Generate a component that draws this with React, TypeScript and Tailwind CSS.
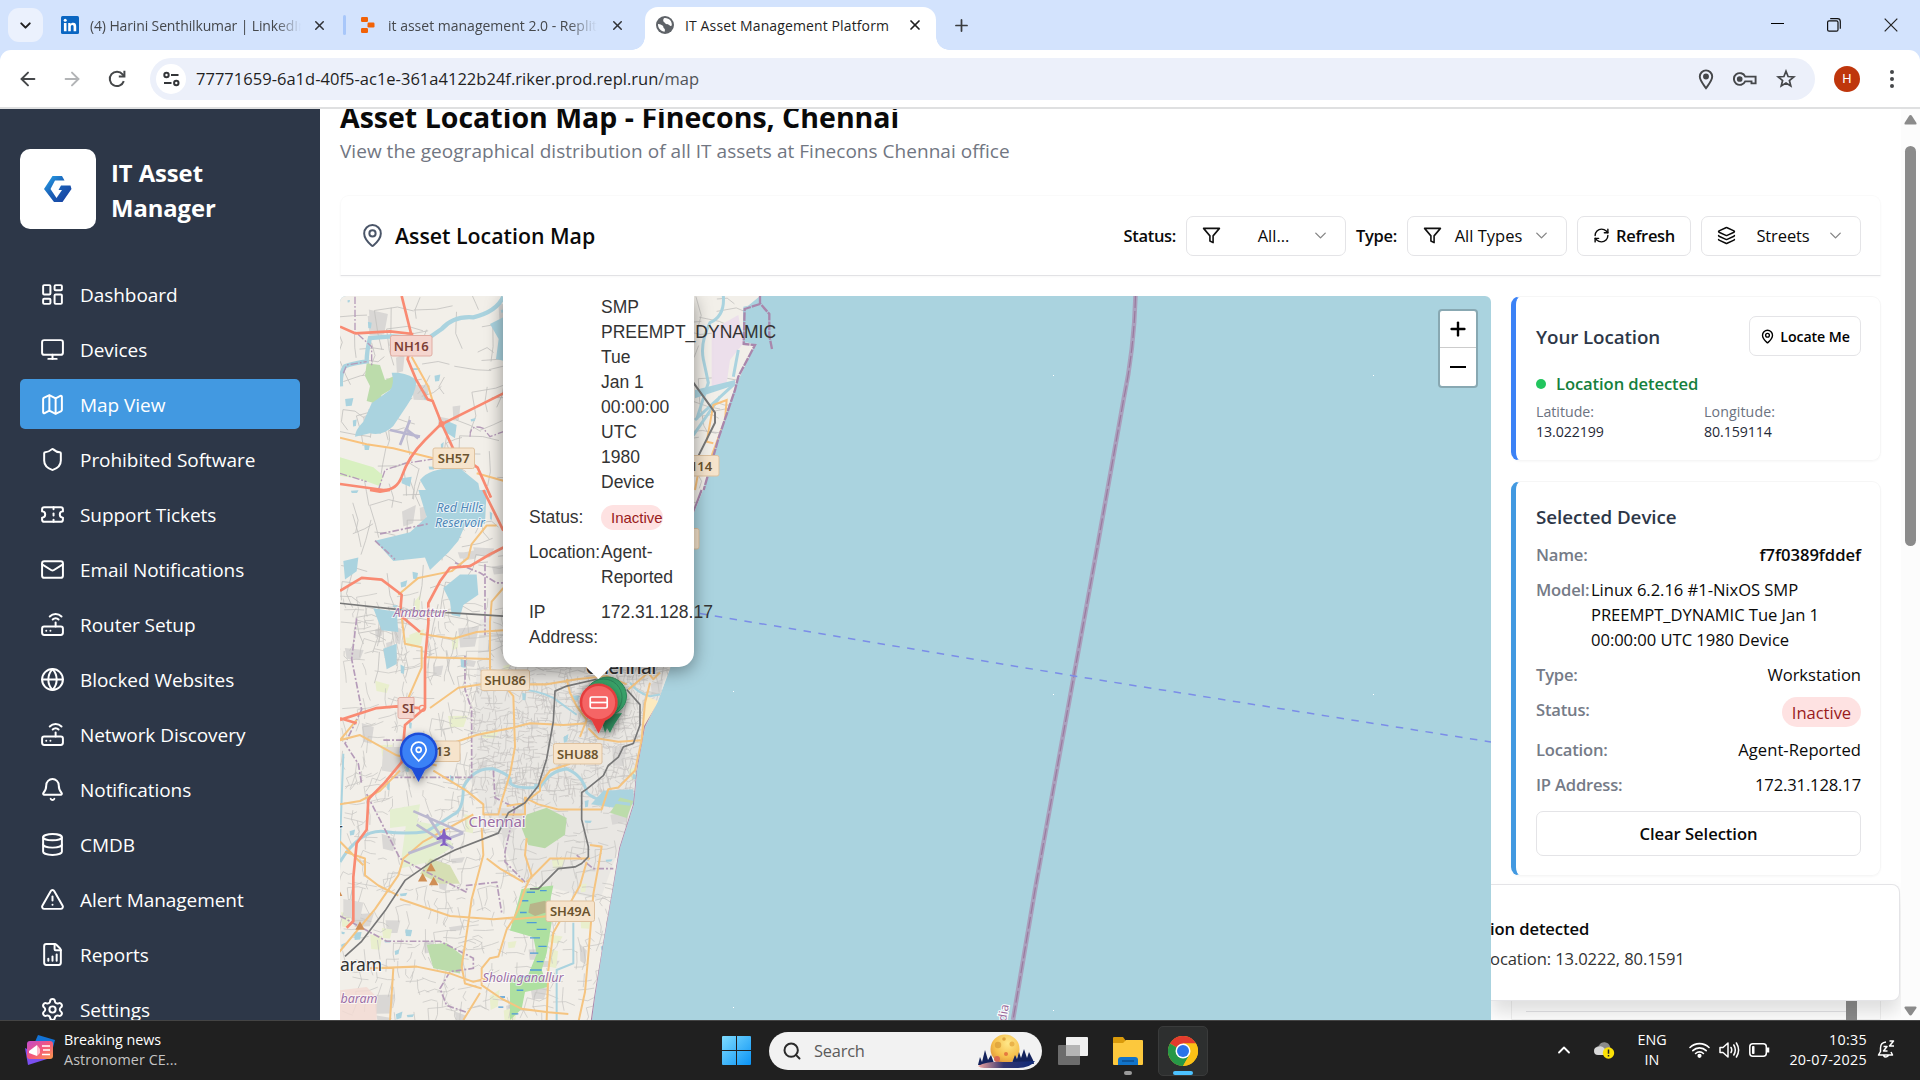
import React from "react";
import {
  ArrowLeft, ArrowRight, Bell, ChevronDown, ChevronUp, Database, FileChartColumnIncreasing, Globe, Layers,
  LayoutDashboard, Mail, Map as MapIcon, MapPin, Monitor, Plus, RefreshCw, Router, Search, Settings, Shield,
  Ticket, TriangleAlert, X,
} from "lucide-react";

const NAV = [
  { icon: LayoutDashboard, label: "Dashboard" },
  { icon: Monitor, label: "Devices" },
  { icon: MapIcon, label: "Map View", active: true },
  { icon: Shield, label: "Prohibited Software" },
  { icon: Ticket, label: "Support Tickets" },
  { icon: Mail, label: "Email Notifications" },
  { icon: Router, label: "Router Setup" },
  { icon: Globe, label: "Blocked Websites" },
  { icon: Router, label: "Network Discovery" },
  { icon: Bell, label: "Notifications" },
  { icon: Database, label: "CMDB" },
  { icon: TriangleAlert, label: "Alert Management" },
  { icon: FileChartColumnIncreasing, label: "Reports" },
  { icon: Settings, label: "Settings" },
];

/* ---------- browser chrome ---------- */

function TabStrip() {
  return (
    <div className="flex h-[50px] shrink-0 items-center bg-[#d3e3fd] pl-2 text-[14px] text-[#45484c]">
      <div className="flex h-[34px] w-[35px] items-center justify-center rounded-[11px] bg-[#ebf1fd]">
        <ChevronDown size={17} strokeWidth={2.8} className="text-[#1f1f1f]" />
      </div>
      <div className="ml-[18px] flex w-[282px] items-center">
        <svg width="18" height="18" viewBox="0 0 18 18">
          <rect width="18" height="18" rx="1.5" fill="#0a66c2" />
          <circle cx="4.2" cy="4.2" r="1.5" fill="#fff" />
          <path d="M2.9 7h2.6v8.2H2.9zM7.2 7h2.4v1.2C10.200 7.200 11 6.800 12.200 6.800c2.400 0 3 1.500 3 3.800v4.600h-2.600v-4.200c0-1.200-.2-2-1.300-2-1.200 0-1.500.9-1.500 2v4.200H7.200z" fill="#fff" />
        </svg>
        <span className="ml-[11px] w-[211px] overflow-hidden whitespace-nowrap tracking-[-0.13px] [mask-image:linear-gradient(to_right,#000_88%,transparent)]">(4) Harini Senthilkumar | LinkedIn</span>
        <X size={15} strokeWidth={2.4} className="ml-[11px] text-[#303236]" />
      </div>
      <div className="h-5 w-[3px] rounded-full bg-[#a8c7fa]" />
      <div className="ml-[15px] flex w-[284px] items-center">
        <svg width="14" height="16" viewBox="0 0 14 16" fill="#f26207">
          <rect x="0" y="0" width="7" height="5" rx="1.2" />
          <rect x="6.500" y="5.500" width="7" height="5" rx="1.2" />
          <rect x="0" y="11" width="7" height="5" rx="1.2" />
        </svg>
        <span className="ml-[13px] w-[209px] overflow-hidden whitespace-nowrap [mask-image:linear-gradient(to_right,#000_86%,transparent)]">it asset management 2.0 - Replit</span>
        <X size={15} strokeWidth={2.4} className="ml-[13px] text-[#303236]" />
      </div>
      <div className="relative mt-[7px] flex h-[43px] w-[291px] items-center self-start rounded-t-[13px] bg-white pl-[11px] text-[#1f1f1f] before:absolute before:bottom-0 before:left-[-13px] before:size-[13px] before:bg-[radial-gradient(circle_at_0_0,transparent_12.5px,#fff_13px)] after:absolute after:right-[-13px] after:bottom-0 after:size-[13px] after:bg-[radial-gradient(circle_at_100%_0,transparent_12.5px,#fff_13px)]">
        <svg width="18" height="18" viewBox="0 0 18 18" className="mb-[7px]">
          <circle cx="9" cy="9" r="9" fill="#5f6368" />
          <path d="M2 8c2-.2 3 .8 4.500 1.600s.3 2.400 1.700 2.800c1.200.4.4 2 .8 3.200-4 .1-7.200-3.400-7-7.600zM8 2.200c2-.5 5.200.6 6.600 2.600.9 1.400 1.300 2.800 1.200 4.700-1 .8-1.900.6-2.500-.4-.7-1-2-.8-3.200-1.200s-1-1.700-2.200-2c-1-.3-.8-2.900.1-3.700z" fill="#fff" />
        </svg>
        <span className="mb-[7px] ml-[11px] w-[213px] whitespace-nowrap tracking-[0.12px]">IT Asset Management Platform</span>
        <X size={16} strokeWidth={2.6} className="mb-[7px] ml-[9px]" />
      </div>
      <Plus size={19} strokeWidth={2.2} className="ml-[16px] text-[#3a3c3f]" />
      <div className="ml-auto flex items-center gap-[43px] pr-[22px] text-[#1b1b1b]">
        <div className="mb-[3px] h-[1.500px] w-[13px] bg-black" />
        <svg width="14" height="14" viewBox="0 0 14 14" fill="none" stroke="#111" strokeWidth="1.200">
          <rect x=".6" y="2.800" width="10.400" height="10.400" rx="1.500" />
          <path d="M3.200.7h7.300a2.800 2.800 0 0 1 2.800 2.800v7.300" />
        </svg>
        <svg width="14" height="14" viewBox="0 0 14 14" stroke="#222" strokeWidth="1.200"><path d="M.7.7l12.600 12.600M13.300.7L.7 13.300" /></svg>
      </div>
    </div>
  );
}

function Toolbar() {
  return (
    <div className="shrink-0 bg-[#d3e3fd]">
      <div className="flex h-[59px] items-center rounded-t-[11px] border-b-2 border-[#dfe0e1] bg-white pt-px pl-[17px]">
        <ArrowLeft size={22} strokeWidth={2.1} className="text-[#45474a]" />
        <ArrowRight size={22} strokeWidth={2.1} className="ml-[22px] text-[#b2b4b6]" />
        <svg width="20" height="20" viewBox="0 0 20 20" fill="none" stroke="#454749" strokeWidth="2" className="ml-[24px]">
          <path d="M16.800 12.200A7.200 7.200 0 1 1 15.600 5.300L17 7" />
          <path d="M17.400 1.800v5.600h-5.600" />
        </svg>
        <div className="ml-[23px] flex h-[42px] w-[1665px] items-center rounded-full bg-[#ecf0fa] pl-[6px]">
          <div className="flex size-[30px] items-center justify-center rounded-full bg-white">
            <svg width="17" height="16" viewBox="0 0 17 16" fill="none" stroke="#333538" strokeWidth="2">
              <circle cx="3.500" cy="4" r="2.200" /><path d="M8 4h7.500M1 12h7.500" /><circle cx="13.300" cy="12" r="2.200" />
            </svg>
          </div>
          <span className="ml-[10px] pt-px text-[16.500px] tracking-[0.02px] text-[#1f1f1f]">77771659-6a1d-40f5-ac1e-361a4122b24f.riker.prod.repl.run<span className="text-[#505357]">/map</span></span>
          <div className="ml-auto flex items-center gap-[19px] pr-[19px]">
            <svg width="16" height="21" viewBox="0 0 16 21" fill="none" stroke="#45474a" strokeWidth="1.900">
              <path d="M8 19.200C5 15 1.800 11.500 1.800 7.600a6.200 6.200 0 0 1 12.400 0C14.200 11.500 11 15 8 19.200z" /><circle cx="8" cy="7.500" r="2" fill="#45474a" />
            </svg>
            <svg width="24" height="14" viewBox="0 0 24 14" fill="none" stroke="#45474a" strokeWidth="1.900">
              <path d="M12.200 4.600H22.600v6.800H18.500V9.400h-6.300A5.900 5.900 0 1 1 12.200 4.600z" /><circle cx="6.700" cy="7" r="1.900" fill="#45474a" />
            </svg>
            <svg width="20" height="20" viewBox="0 0 20 20" fill="none" stroke="#45474a" strokeWidth="1.700">
              <path d="M10 2.200l2.100 5.300 5.700.4-4.400 3.600 1.400 5.500L10 14l-4.800 3 1.400-5.500L2.200 7.900l5.700-.4z" />
            </svg>
          </div>
        </div>
        <div className="ml-[19px] flex size-[26px] items-center justify-center rounded-full bg-[#bf360c] font-[Roboto] text-[13px] text-white">H</div>
        <div className="ml-[30px] flex flex-col gap-[3px]">
          <i className="size-[4px] rounded-full bg-[#45474a]" /><i className="size-[4px] rounded-full bg-[#45474a]" /><i className="size-[4px] rounded-full bg-[#45474a]" />
        </div>
      </div>
    </div>
  );
}

/* ---------- sidebar ---------- */

function Sidebar() {
  return (
    <aside className="flex w-[320px] shrink-0 flex-col overflow-hidden bg-[#2d3748] px-5 pt-10 text-white">
      <div className="flex shrink-0 items-center gap-[15px]">
        <div className="flex h-20 w-[76px] items-center justify-center rounded-[10px] bg-white">
          <svg width="28" height="26" viewBox="0 0 28 26">
            <defs>
              <linearGradient id="lg" x1="0" y1="0" x2="1" y2="1"><stop offset="0" stopColor="#29a9ee" /><stop offset=".45" stopColor="#1b62b8" /><stop offset="1" stopColor="#173b9c" /></linearGradient>
            </defs>
            <path d="M8.500 0H18L20.500 4.500H11L6.500 13l6 9 5.500-8h-3.500L17 9.500h9.500L27.500 13 18.500 26H10L0 13z" fill="url(#lg)" />
          </svg>
        </div>
        <div className="pt-[4px] text-[23.800px] leading-[35px] font-bold tracking-[-0.05px]">IT Asset<br />Manager</div>
      </div>
      <nav className="mt-10 flex flex-col gap-[5px]">
        {NAV.map(({ icon: Icon, label, active }) => (
          <div key={label} className={active ? "flex h-[50px] shrink-0 items-center gap-[15px] rounded-[5px] bg-[#4299e1] pl-5" : "flex h-[50px] shrink-0 items-center gap-[15px] pl-5"}>
            <Icon size={25} strokeWidth={1.900} />
            <span className="pt-[2px] text-[19px] tracking-[-0.05px]">{label}</span>
          </div>
        ))}
      </nav>
    </aside>
  );
}

/* ---------- map ---------- */

const COAST = "M340 296H760L743 310V341L755 345 735 387 717 443 703 490 693 515 684 560 676 640 670 669 658 701 645 727 637 771 634 804 620 848 613 889 603 946 595 997 592 1020H340z";

function seeded(seed: number) {
  let s = seed;
  return () => {
    s = (s * 1664525 + 1013904223) % 4294967296;
    return s / 4294967296;
  };
}

function streets(seed: number, x0: number, y0: number, x1: number, y1: number, cell: number, p: number) {
  const r = seeded(seed);
  let d = "";
  for (let y = y0; y < y1; y += cell)
    for (let x = x0; x < x1; x += cell) {
      const jx = x + (r() - 0.5) * cell * 0.7;
      const jy = y + (r() - 0.5) * cell * 0.7;
      const t = (r() - 0.5) * cell * 0.7;
      const len = cell * (0.5 + r() * 0.9);
      const bend = (r() - 0.5) * cell * 0.8;
      if (r() < p) d += `M${jx.toFixed(1)} ${jy.toFixed(1)}l${len.toFixed(1)} ${t.toFixed(1)} ${(len * 0.7).toFixed(1)} ${bend.toFixed(1)}`;
      if (r() < p) d += `M${jx.toFixed(1)} ${jy.toFixed(1)}l${(-t).toFixed(1)} ${len.toFixed(1)} ${bend.toFixed(1)} ${(len * 0.7).toFixed(1)}`;
    }
  return d;
}

function patches(seed: number, n: number, size: number, x0: number, y0: number, x1: number, y1: number) {
  const r = seeded(seed);
  let d = "";
  for (let i = 0; i < n; i++) {
    const x = x0 + r() * (x1 - x0);
    const y = y0 + r() * (y1 - y0);
    const w = size * (0.4 + r());
    const h = size * (0.3 + r());
    const k = (r() - 0.5) * h;
    d += `M${x.toFixed(1)} ${y.toFixed(1)}l${w.toFixed(1)} ${k.toFixed(1)} ${(-w * 0.2).toFixed(1)} ${h.toFixed(1)} ${(-w * 0.7).toFixed(1)} ${(-k * 0.5).toFixed(1)}z`;
  }
  return d;
}

const ROAD_GREY = streets(7, 340, 296, 720, 660, 17, 0.34);
const ROAD_DENSE = streets(11, 345, 600, 680, 1020, 10, 0.36);
const ROAD_CORE = streets(23, 470, 670, 650, 800, 6, 0.45);
const BUILT = patches(5, 70, 16, 340, 300, 690, 1020);
const PONDS = patches(9, 70, 6, 340, 300, 640, 1020);
const MEADOWS = patches(31, 26, 14, 340, 560, 640, 1020);

function RoadSign({ x, y, w, text, red }: { x: number; y: number; w: number; text: string; red?: boolean }) {
  return (
    <g>
      <rect x={x} y={y} width={w} height="20.500" rx="2" fill={red ? "#f5d6cf" : "#f6e4cc"} stroke={red ? "#e0ada3" : "#dfc29f"} />
      <text x={x + w / 2} y={y + 15.200} textAnchor="middle" fontSize="13" fontWeight="600" fill={red ? "#7c3e35" : "#6a532e"}>{text}</text>
    </g>
  );
}

function MapArt() {
  return (
    <svg className="block size-full font-['Noto_Sans',sans-serif]" viewBox="340 296 1151 724">
      <defs>
        <clipPath id="land"><path d={COAST} /></clipPath>
        <filter id="sh" x="-50%" y="-50%" width="200%" height="200%"><feDropShadow dx="0" dy="3" stdDeviation="4" floodOpacity=".5" /></filter>
      </defs>
      <rect x="340" y="296" width="1151" height="724" fill="#aad3df" />
      <path d={COAST} fill="#f2efe9" />
      <g clipPath="url(#land)">
        <path d="M480 620L560 600 670 660 655 720 640 790 600 900 520 880 470 780z" fill="#e6e4df" opacity=".7" />
        <path d={BUILT} fill="#d9d7d5" />
        <path d={MEADOWS} fill="#e9efcd" />
        <path d={ROAD_GREY} stroke="#c2c0be" strokeWidth=".8" fill="none" />
        <path d={ROAD_DENSE} stroke="#c6c4c2" strokeWidth=".7" fill="none" />
        <path d={ROAD_CORE} stroke="#c2c0bd" strokeWidth=".6" fill="none" />
        <path d={PONDS} fill="#aad3df" />

        {/* northern half */}
        <g transform="translate(330 100) scale(.33333)">
          <path d="M110 790l40 5 15 45 35-15 5 30-50 30-10 28-35-10 10-45-15-30z" fill="#bcdcab" />
          <path d="M30 1072l100 30 30 25-10 32-60-22-60-10z" fill="#d8f0c0" />
          <path d="M205 818q40 5 55 25-5 40-30 75l-40 60q-30 30-70 22l-45 10q0-20 25-45l25-55 55-40q15-20 5-52z" fill="#aad3df" />
          <path d="M345 960l35 15-5 40-30-20zM480 672l40-20v130l-22-5 8-60zM215 1135l30-5-5 30-25-10zM270 1140q30-40 120-35l55 45 10 50H300q-10-30-30-60z" fill="#aad3df" />
          <path d="M520 590q-20 45-90 62-60-5-95 35l-40 28-110-6-65 5q-10 40-10 70-40 5-65 15-15 20-12 60" fill="none" stroke="#aad3df" strokeWidth="13" />
          <path d="M1145 690l80-45 15 85-40 50-10 70-45 15z" fill="#ecdfeb" />
          <path d="M1240 620l50-10 28 35v65l-75 20z" fill="#aad3df" />
          <path d="M1180 588q5 60-40 80-30 60-20 110l15 70-35 110M1225 750l-15 80M1095 960l120-110M1080 1020l90-130" fill="none" stroke="#aad3df" strokeWidth="9" />
          <path d="M1095 870l120-30 0 15-120 40z" fill="#aad3df" />
          <path d="M75 590v105l50 45 0 60M145 1170l20-60 60-20 100-15M30 1120l80 25M420 1010q0-40 40-25l20 25 40-15M40 820l10-25 60-10" fill="none" stroke="#b59bb9" strokeWidth="4" strokeDasharray="22 6 5 6" />
          <path d="M180 990l90 20M210 1035l30-75M225 985l40 30" stroke="#b9b6d0" strokeWidth="8" />
          <path d="M30 1013l80 20 80 12 120 30M245 770l50 90 15 50M440 1120l80 22M1110 1090l-15 80M1150 1030l-20-5 20-110 40-15-5 60-60 160" fill="none" stroke="#f9c27c" strokeWidth="6" />
          <path d="M215 588l30 120-12 70 25 60 35 60 15 5 30 75 35 75 70 50 40 90M75 700l105-6 70 8M30 680l45 20M30 1152l130 18q40 0 55-40 20-60 70-110l45-45 190-95" fill="none" stroke="#f98a72" strokeWidth="8" />
          <circle cx="335" cy="972" r="9" fill="#f98a72" />
          <path d="M1090 848l65 90v30l-55 110" fill="none" stroke="#777" strokeWidth="6" />
        </g>

        {/* southern half */}
        <g transform="translate(330 490) scale(.33333 .33803)">
          <path d="M265 0H470l-5 100-60 5-20 45-30 35-55 52-15-37-95 10-55-60 105-25 50-45z" fill="#aad3df" />
          <path d="M340 290l50-40 50 0 5 60-45 30-10 35-25-5-5-40zM40 210l45-10-5 40-35 25zM130 350l70 10 5 60-50-5zM160 470l40-15v60l-30 15zM820 890l90-5 3 45-60 10-70-10z" fill="#aad3df" />
          <path d="M40 1210l60 10-10 50-50-10zM160 760l60 0-5 80-60-10zM500 940l80 5v40l-60 50z" fill="#dcdad7" />
          <path d="M590 960l60-20 60 30-5 50-60 40-50-10-20-50z" fill="#b9d9a8" />
          <path d="M290 1345l60-5 50 40-10 50-80-15zM870 910l40 10-20 50-50-15z" fill="#bcdcab" />
          <path d="M230 975l110 20 30 60-70 45-90 20zM180 945l90-15-10 60-80 10z" fill="#e4efd0" />
          <path d="M300 1090l60 20 30 55-60 0-60-30z" fill="#d6dfb4" />
          <path d="M950 610l35 15-30 75-25 60 5-60z" fill="#fbeac0" />
          <path d="M575 1180l95-10-15 70 10 40-15 90-15 50 20 50-70 15-10 50-35 33 0-120 55-15 25-60-10-50-70-20z" fill="#aee0a0" />
          <path d="M600 1225l45-10 20 30-50 15-20-10z" fill="#b8b48a" />
          <path d="M590 1190h25M630 1185h20M575 1215h20M570 1250h20M590 1280h30M620 1300h30M600 1325h30M625 1350h25M600 1370h25M620 1395h20M600 1420h35M570 1440h30M560 1480h20M510 1500h15M505 1530h15M545 1550h20" stroke="#4d9bd6" strokeWidth="4" />
          <path d="M30 1480l80-10 30 30 0 68-110 0z" fill="#f3d9d2" opacity=".8" />
          <path d="M30 1100q60-95 130-90 70 10 130 0 50-30 80-50 30-10 30-80 30-60 90-55 60 20 50 40 10 20 90 15 30-50 80-55 50 20 60 70 20 20 60 25l70 10" fill="none" stroke="#aad3df" strokeWidth="9" />
          <path d="M40 780l-15 400M560 590q60 0 110 25l70 50M900 570q20 30 60 40l30-5M730 1280l0 120-50 20 0 148" fill="none" stroke="#aad3df" strokeWidth="6" />
          <path d="M150 130l145-30M135 150l60 55M375 215l75 30 50 30 20 0M465 220v150l0 60M80 380l-15 120 30 150-50 100 40 60 10 60M160 740l70 0M185 850h240l0-200-20-60 0-100M110 900l100 190 200 100 0-20 90-10 15 90M30 1260l140 75 160 0 100 50 0 30-70 10-30 50 20 50 60 20M490 830l5 80 60 30-30 130 0 30 60 60M740 1080l50 40 60 0" fill="none" stroke="#b59bb9" strokeWidth="5" strokeDasharray="20 6 6 6" />
          <path d="M1115 0l-30 80M1025 530l-35 95-45 75-22 130-10 100-42 130-20 120-30 170-25 150-10 68" fill="none" stroke="#a987ac" strokeWidth="7" />
          <path d="M205 310l60-50 100-20 50-40 10-40 45-55 30 0M520 290l-35 40-5 60 0 140 70 80 5 150-15 80-25 80-10 40-45 0 0-30-50-40-100-60M215 375l10 80 50 10 0 60-40 90M270 425l100 15 70-20 80-5M290 495l190 5M590 575l60 0 90-15 90-10 60 25M300 645l85-60 100-15M30 740l60-15 110 60 60 15 60 15M30 930l60-10 60-30 60-60M320 750l60-5 60-20 100-20 60-15 100 5 70-5M30 740l50-60M960 570l-15 60-10 110-70 5-60-10-30-30M935 740l-20 90-50 50-30 5-20 60-130 0-60-15-40-20 0 50-70 0M590 920l40-30 0-20 30-40 60-20M710 560l10 40 20 40 30 40-20 50M430 960l-150 80-60 50-15 50-70 100-110 130M455 1000l5 80-35 130-10 70-20 130 10 50 50 15M210 1210l150 50 130 10 60-5M205 1200l-60-30-40-30 0-50-60-20M30 1040l70 70M550 1270l-20 30-25 80-25 5-25 30 0 50 60 40 60 30 80 10 60 5M550 1270l110-10M590 1160l70-70 120 0M590 1030l-5 50 20 60-20 40-20 60-20 40M470 1090l40 30 70 40M780 1050l35 5-10 60-15 80-15 180-10 110-20 90M770 1100l-20 70-40 70-40 70-15 110-5 148M190 1415l-10 153M120 1415l140-5 100 20 70 25 40-10M400 1568l50-80M590 925l-60 10M895 590l60-50 15 20 20-20" fill="none" stroke="#f5c480" strokeWidth="6" strokeLinejoin="round" />
          <path d="M460 0l35 70 25 50M520 170l-40 20-60 35-60 5-30 40-35 65 0 60-10 110 0 140-60 50-10 110-50 60-50 50-5 90-30 40-10 100 0 130-20 20M30 298l65-38 60 5 60 45-5 60 60 50M30 680l110-35 60-5 70 5M30 675l50 15M120 0l30 5 30-5" fill="none" stroke="#f98a72" strokeWidth="8" strokeLinejoin="round" />
          <circle cx="277" cy="646" r="9" fill="none" stroke="#f98a72" strokeWidth="4" />
          <path d="M30 335l170 18 320 20M800 560l-90 20-35 15-5 90-20 110-25 80-40 50-50 30-20 40-10 20-130 50-70 35-80 55-60 90-70 90-50 45M890 590l40 45 0 60-20 55-30 10-15 30-30 25-15 30-50 40-15 10 0 80 20 80 0 30-20 20-20 10-50 5-60 60-25 0" fill="none" stroke="#777" strokeWidth="5" strokeLinejoin="round" />
          <path d="M250 950l150 65M235 1075l165-60M260 990l110 70M290 960l60 90" stroke="#bbb8cf" strokeWidth="8" />
          <path d="M339 1004q4-4 6 0l3 16 16 10v6l-17-4-1 12 7 6v4l-11-3-11 3v-4l7-6-1-12-17 4v-6l16-10z" fill="#8461c4" />
          <path d="M303 1103l14 25h-28zM278 1133l14 25h-28zM311 1144l14 25h-28zM90 1276l14 25H76zM30 1188l7 13h-7z" fill="#d08f55" />
        </g>
      </g>

      {/* harbour and northern shoreline */}
      <path transform="translate(330 100) scale(.33333)" d="M1290 588v22l28 32v65l8 40M1290 612l-46 15-3 105 34 3-50 95-10 40-48 140-46 160" fill="none" stroke="#a987ac" strokeWidth="7" strokeDasharray="26 3" />

      {/* maritime boundary and ferry line */}
      <path d="M1135.500 296Q1134 350 1123.500 400L1098 543 1074 675 1035 890 1013 1020" fill="none" stroke="#aaa0bd" strokeWidth="4.500" />
      <path d="M1135.500 296Q1134 350 1123.500 400L1098 543 1074 675 1035 890 1013 1020" fill="none" stroke="#9b7a9f" strokeWidth="1.200" strokeDasharray="12 3" />
      <path d="M700 613.500L1074 676 1491 742" fill="none" stroke="#7b8de8" strokeWidth="1.500" strokeDasharray="7.500 7.500" />
      <path d="M733 691h1v1h-1zM1053 375h1v1h-1zM1373 375h1v1h-1zM1053 694h1v1h-1zM1373 694h1v1h-1zM733 1007h1v1h-1zM1053 1010h1v1h-1z" fill="#fff" />
      <text transform="translate(1006 1022) rotate(-80)" fontSize="12" fill="#9b6f9e" stroke="#fff" strokeWidth="2" paintOrder="stroke">dia</text>

      {/* place names */}
      <g stroke="#fff" strokeOpacity=".7" strokeWidth="2" paintOrder="stroke" textAnchor="middle">
        <g fontStyle="italic" fontSize="12.500">
          <text x="460" y="512" fill="#4f86b8" textLength="47">Red Hills</text>
          <text x="460" y="527" fill="#4f86b8" textLength="50">Reservoir</text>
          <text x="420" y="617" fill="#9b6fa6" textLength="53">Ambattur</text>
          <text x="523" y="982" fill="#9b6fa6" textLength="81">Sholinganallur</text>
          <text x="359" y="1003" fill="#9b6fa6">baram</text>
        </g>
        <text x="497" y="827" fontSize="15" fill="#9b6fa6" textLength="57">Chennai</text>
        <text x="621" y="674" fontSize="19" fontWeight="500" fill="#333" textLength="71">Chennai</text>
        <text x="361" y="971" fontSize="17.500" fill="#333" textLength="42">aram</text>
        <text x="339" y="835" fontSize="17" fill="#333">r</text>
      </g>
      <RoadSign x={390.500} y={335.500} w={41.500} text="NH16" red />
      <RoadSign x={433} y={448} w={41.500} text="SH57" />
      <RoadSign x={676} y={455.500} w={43} text="S114" />
      <RoadSign x={660} y={528.500} w={39} text="" />
      <RoadSign x={481} y={670} w={48.500} text="SHU86" />
      <g>
        <path d="M414 697.500h-14a2 2 0 0 0-2 2v17a2 2 0 0 0 2 2h14z" fill="#f5d6cf" stroke="#e0ada3" />
        <text x="402" y="713" fontSize="13" fontWeight="600" fill="#7c3e35">SI</text>
      </g>
      <RoadSign x={419} y={741} w={41} text=" 113" />
      <RoadSign x={553.500} y={743.500} w={48.500} text="SHU88" />
      <RoadSign x={546} y={901} w={48.500} text="SH49A" />

      {/* device markers */}
      <g filter="url(#sh)">
        <path d="M600 715l5 18 2-5 3 5 4-8 8-12z" fill="#2f855a" />
        <circle cx="607.500" cy="696" r="19" fill="#38a169" stroke="#2f855a" strokeWidth="1" />
        <circle cx="603.500" cy="697.500" r="18.500" fill="#3aa66b" stroke="#2f855a" strokeWidth="1" />
      </g>
      <g filter="url(#sh)">
        <path d="M591.500 720h14l-7 13.500z" fill="#e53e3e" />
        <circle cx="598.700" cy="702.500" r="17.700" fill="#f56565" stroke="#e53e3e" strokeWidth="2.500" />
      </g>
      <g fill="none" stroke="#fff" strokeWidth="1.700"><rect x="590.200" y="697" width="17" height="11" rx="1.500" /><path d="M590.200 702.500h17" /></g>
      <g filter="url(#sh)">
        <path d="M411.500 769h14l-7 13z" fill="#1d4ed8" />
        <circle cx="418.700" cy="751.500" r="17.700" fill="#3b82f6" stroke="#1d4ed8" strokeWidth="2.500" />
      </g>
      <g fill="none" stroke="#fff" strokeWidth="1.700"><path d="M418.700 761c-4-4-7.500-7.500-7.500-11.300a7.500 7.500 0 0 1 15 0c0 3.800-3.500 7.300-7.500 11.300z" /><circle cx="418.700" cy="749.800" r="2.500" /></g>
    </svg>
  );
}

function MapPopup() {
  return (
    <div className="absolute top-0 left-[163px] h-[371px] w-[191px] font-['Liberation_Sans',sans-serif] text-[17.500px] leading-[25px] text-[#333]">
      <div className="absolute inset-0 rounded-b-[15px] bg-white shadow-[0_4px_18px_rgba(0,0,0,0.4)]" />
      <svg className="absolute top-[370px] left-[82px]" width="27" height="13" viewBox="0 0 27 13"><path d="M0 0h27L13.500 13z" fill="#fff" /></svg>
      <div className="relative grid grid-cols-[72px_1fr] gap-y-[10px] pl-[26px]">
        <span />
        <span className="-mt-px">SMP<br />PREEMPT_DYNAMIC<br />Tue<br />Jan 1<br />00:00:00<br />UTC<br />1980<br />Device</span>
        <span>Status:</span>
        <span className="h-[25px] w-[62px] rounded-full bg-[#fee2e2] pl-[10px] text-[15px] leading-[26px] text-[#991b1b]">Inactive</span>
        <span>Location:</span>
        <span>Agent-<br />Reported</span>
        <span>IP<br />Address:</span>
        <span>172.31.128.17</span>
      </div>
    </div>
  );
}

function MapPanel() {
  return (
    <div className="relative h-[724px] w-[1151px] shrink-0 overflow-hidden rounded-t-[6px]">
      <MapArt />
      <MapPopup />
      <div className="absolute top-[13px] right-[13px] flex w-[40px] flex-col rounded-[4px] border-2 border-black/20 bg-white bg-clip-padding">
        <div className="flex h-[37px] items-center justify-center border-b border-[#ccc]"><Plus size={22} strokeWidth={2.600} className="text-black" /></div>
        <div className="flex h-[38px] items-center justify-center"><i className="h-[2.500px] w-[16px] bg-black" /></div>
      </div>
    </div>
  );
}

/* ---------- page ---------- */

function FilterIcon() {
  return (
    <svg width="19" height="19" viewBox="0 0 24 24" fill="none" stroke="#111" strokeWidth="2" strokeLinecap="round" strokeLinejoin="round" className="shrink-0">
      <polygon points="22 3 2 3 10 12.46 10 19 14 21 14 12.46 22 3" />
    </svg>
  );
}

function Select({ icon, children }: { icon: React.ReactNode; children: React.ReactNode }) {
  return (
    <div className="flex h-10 w-[160px] items-center rounded-[7px] border border-[#e4e4e7] px-[15px] text-[16.500px] text-[#0a0a0a]">
      {icon}
      {children}
      <ChevronDown size={19} strokeWidth={1.700} className="shrink-0 text-[#858585]" />
    </div>
  );
}

function HeaderCard() {
  return (
    <div className="mt-[30px] flex h-[81px] items-center rounded-[9px] rounded-b-none border border-[#fafafa] border-b-[#e2e2e5] pr-[19px] pl-[19px] text-[16.500px] text-[#0a0a0a] shadow-[0_1px_2px_rgba(0,0,0,0.03)]">
      <MapPin size={25} strokeWidth={1.900} className="text-[#4a5568]" />
      <span className="ml-[10px] pt-px text-[21.300px] font-semibold">Asset Location Map</span>
      <div className="ml-auto flex items-center">
        <span className="mr-[10px] pt-[2px] font-semibold tracking-[-0.3px]">Status:</span>
        <Select icon={<FilterIcon />}><span className="flex-1 pt-[2px] pl-[15px] text-center">All...</span></Select>
        <span className="mx-[10px] pt-[2px] font-semibold tracking-[-0.3px]">Type:</span>
        <Select icon={<FilterIcon />}><span className="flex-1 pt-[2px] pl-[3px] text-center whitespace-nowrap">All Types</span></Select>
        <div className="mx-[10px] flex h-10 w-[114px] items-center justify-center gap-[6px] rounded-[7px] border border-[#e4e4e7] font-semibold">
          <RefreshCw size={17} strokeWidth={2} /><span className="pt-[2px] tracking-[-0.3px]">Refresh</span>
        </div>
        <Select icon={<Layers size={19} strokeWidth={1.900} className="shrink-0" />}><span className="flex-1 pt-[2px] pl-[4px] text-center tracking-[-0.1px]">Streets</span></Select>
      </div>
    </div>
  );
}

function Row({ label, children }: { label: string; children: React.ReactNode }) {
  return (
    <div className="flex justify-between leading-[25px]">
      <span className="font-semibold tracking-[-0.2px] text-[#757b87]">{label}</span>
      {children}
    </div>
  );
}

function SidePanel() {
  return (
    <div className="relative ml-5 flex w-[370px] shrink-0 flex-col">
      <section className="h-[165px] rounded-[9px] border border-l-[5px] border-[#f6f6f6] border-l-[#3b82f6] pr-[19px] pl-[20px] shadow-[0_1px_2px_rgba(0,0,0,0.03)]">
        <div className="mt-[19px] flex h-10 items-center justify-between">
          <h3 className="pt-[2px] text-[18.800px] font-semibold tracking-[-0.1px] text-[#2d3748]">Your Location</h3>
          <div className="flex h-10 w-[112px] items-center justify-center gap-[5px] rounded-[7px] border border-[#e4e4e7] text-[14.200px] font-semibold tracking-[-0.1px]">
            <MapPin size={15} strokeWidth={2.200} /><span className="pt-[2px]">Locate Me</span>
          </div>
        </div>
        <div className="mt-[16px] flex h-[25px] items-center gap-[10px] text-[16.600px] font-semibold tracking-[-0.1px] text-[#15803d]">
          <i className="mb-px size-[10px] rounded-full bg-[#22c55e]" />Location detected
        </div>
        <div className="mt-[5px] grid grid-cols-[168px_1fr] text-[14.200px] leading-[20px] text-[#1f2937]">
          <span className="font-medium text-[#6b7280]">Latitude:</span><span className="font-medium tracking-[0.1px] text-[#6b7280]">Longitude:</span>
          <span className="tracking-[-0.1px]">13.022199</span><span className="tracking-[-0.1px]">80.159114</span>
        </div>
      </section>
      <section className="mt-5 h-[395px] rounded-[9px] border border-l-[5px] border-[#f6f6f6] border-l-[#4299e1] pr-[19px] pl-[20px] text-[16.600px] tracking-[-0.05px] text-[#0a0a0a] shadow-[0_1px_2px_rgba(0,0,0,0.03)]">
        <h3 className="mt-[20px] h-[31px] text-[18.800px] leading-[31px] font-semibold text-[#2d3748]">Selected Device</h3>
        <div className="mt-[9px] flex flex-col gap-[10px]">
          <Row label="Name:"><span className="font-semibold tracking-[-0.02px]">f7f0389fddef</span></Row>
          <Row label="Model:"><span className="w-[270px]">Linux 6.2.16 #1-NixOS SMP<br />PREEMPT_DYNAMIC Tue Jan 1<br />00:00:00 UTC 1980 Device</span></Row>
          <Row label="Type:"><span>Workstation</span></Row>
          <Row label="Status:"><span className="flex h-[30px] w-[79px] items-center justify-center rounded-full bg-[#fee2e2] text-[#991b1b]">Inactive</span></Row>
          <Row label="Location:"><span className="tracking-[0.05px]">Agent-Reported</span></Row>
          <Row label="IP Address:"><span className="tracking-[-0.15px]">172.31.128.17</span></Row>
        </div>
        <div className="mt-[14px] flex h-[45px] items-center justify-center rounded-[7px] border border-[#e4e4e7] pt-px font-semibold">Clear Selection</div>
      </section>
      <section className="mt-5 flex h-[124px] flex-col items-end rounded-t-[9px] border border-[#f0f0f0] pr-6">
        <div className="mt-[114px] h-px w-[330px] bg-[#e4e4e7]" />
      </section>
      <div className="absolute top-[704px] right-[24px] h-[20px] w-[11px] bg-[#8b8b8b]" />
      <div className="absolute top-[588px] left-[-20px] h-[117px] w-[409px] rounded-r-[8px] border border-l-0 border-[#e4e4e7] bg-white pt-[30px] text-[16.600px] leading-[27px] tracking-[-0.1px] shadow-[0_12px_18px_rgba(0,0,0,0.13)] [clip-path:inset(-10px_-20px_-40px_0)]">
        <div className="-ml-px font-semibold text-[#0a0a0a]">ion detected</div>
        <div className="-ml-px mt-[3px] text-[#333]">ocation: 13.0222, 80.1591</div>
      </div>
    </div>
  );
}

function ScrollBar() {
  return (
    <div className="flex w-[19px] shrink-0 flex-col items-center bg-[#fcfcfc] pt-[6px]">
      <svg width="13" height="10" viewBox="0 0 13 10"><path d="M6.500 0q1 0 1.500 1l4.500 7q.5 1.500-1 1.500h-10q-1.500 0-1-1.500L5 1q.5-1 1.500-1z" fill="#8b8b8b" /></svg>
      <div className="mt-[21px] h-[400px] w-[11px] rounded-full bg-[#8b8b8b]" />
      <svg width="13" height="10" viewBox="0 0 13 10" className="mt-auto mb-[4px]"><path d="M6.500 9.500q1 0 1.500-1L12.500 2q.5-1.500-1-1.500h-10Q0 .5.500 2L5 8.500q.5 1 1.500 1z" fill="#8b8b8b" /></svg>
    </div>
  );
}

/* ---------- taskbar ---------- */

function Taskbar() {
  return (
    <div className="flex h-[60px] shrink-0 items-center border-t border-[#444] bg-[#202020] text-[14.300px] leading-[20px] text-white">
      <svg width="30" height="30" viewBox="0 0 30 30" className="mb-[2px] ml-[25px]">
        <defs><linearGradient id="nw" x1="0" y1="0" x2="1" y2="1"><stop offset="0" stopColor="#c04bd0" /><stop offset=".5" stopColor="#f4567c" /><stop offset="1" stopColor="#fb9a4b" /></linearGradient></defs>
        <path d="M13 0l17 5-4 15-20-4z" fill="#1273d6" /><path d="M0 13l22 11-19 6z" fill="#7a4ff0" />
        <rect x="2" y="6" width="26" height="18" rx="3" fill="url(#nw)" />
        <path d="M4 16l8-6v11l-8-3z" fill="#fff" /><path d="M12 10l3 4v4l-3 3z" fill="#fbc" /><path d="M17 11h8M18 15h7M17 19.500h8" stroke="#fff" strokeWidth="1.300" />
      </svg>
      <div className="mb-[2px] ml-[9px] w-[658px]"><div>Breaking news</div><div className="tracking-[0.1px] text-[#c4c4c4]">Astronomer CE...</div></div>
      <svg width="29" height="29" viewBox="0 0 29 29">
        <defs><linearGradient id="wn" x1="0" y1="0" x2="1" y2="1"><stop offset="0" stopColor="#7fdcff" /><stop offset="1" stopColor="#0a93f5" /></linearGradient></defs>
        <path d="M1 0h13v14H0V1q0-1 1-1zM15 0h13q1 0 1 1v13H15zM0 15h14v14H1q-1 0-1-1zM15 15h14v13q0 1-1 1H15z" fill="url(#wn)" />
      </svg>
      <div className="ml-[18px] flex h-[38px] w-[273px] items-center rounded-full bg-[#f2f2f2] pr-[6px] pl-[13px]">
        <Search size={20} strokeWidth={2.400} className="text-[#2b2b2b]" />
        <span className="ml-[12px] text-[16.400px] tracking-[-0.2px] text-[#5b5b5b]">Search</span>
        <svg width="58" height="34" viewBox="0 0 58 34" className="ml-auto">
          <defs>
            <radialGradient id="mn" cx=".6" cy=".3" r=".8"><stop offset="0" stopColor="#ffe88a" /><stop offset=".6" stopColor="#f6c04c" /><stop offset="1" stopColor="#d98a35" /></radialGradient>
            <linearGradient id="gr" x1="0" x2="1"><stop offset="0" stopColor="#f2a6a0" /><stop offset=".45" stopColor="#33356f" /><stop offset="1" stopColor="#0e2a7a" /></linearGradient>
          </defs>
          <circle cx="27" cy="15" r="14.500" fill="url(#mn)" />
          <circle cx="20" cy="11" r="3.200" fill="#d99a35" opacity=".7" /><circle cx="34" cy="10" r="2.500" fill="#eab34a" /><circle cx="26" cy="5" r="1.800" fill="#e0a33c" /><circle cx="28" cy="20" r="2" fill="#e6793e" /><circle cx="19" cy="25" r="3" fill="#d86a50" />
          <path d="M0 31l2-8 2 5 3-12 3 10 3-5 3 8 1 3zM34 29l3-8 2 4 2-7 2 6 3-9 3 9 2-6 4 8 1 4z" fill="#14235c" />
          <path d="M0 32q10-5 25-4 18 0 32-1-5 7-17 7H6q-4 0-6-2z" fill="url(#gr)" />
        </svg>
      </div>
      <svg width="30" height="28" viewBox="0 0 30 28" className="ml-[16px]">
        <rect x="8" y="0" width="22" height="19" rx="1" fill="#f0f0f0" /><rect x="0" y="8" width="22" height="20" rx="1" fill="#6c6c6c" /><path d="M8 8h14v11H8z" fill="#b5b5b5" />
      </svg>
      <div className="relative ml-[25px] h-[28px] w-[30px]">
        <svg width="30" height="28" viewBox="0 0 30 28">
          <path d="M0 1q0-1 1-1h9l3 4v8H0z" fill="#d99a0b" /><path d="M0 6h10l3-3h16q1 0 1 1v23q0 1-1 1H1q-1 0-1-1z" fill="#fcc83d" />
          <path d="M5 28v-5q0-3 3-3h14q3 0 3 3v5z" fill="#1173c9" /><path d="M9 24h12" stroke="#0b4a86" strokeWidth="1.300" />
        </svg>
        <i className="absolute top-[34px] left-[11px] h-[4px] w-[8px] rounded-full bg-[#9a9a9a]" />
      </div>
      <div className="relative ml-[15px] flex size-[50px] items-center justify-center rounded-[5px] border border-[#3a3b3b] bg-[#2d2f2f]">
        <svg width="30" height="30" viewBox="0 0 30 30">
          <circle cx="15" cy="15" r="15" fill="#fbc116" />
          <path d="M15 15L2 7.500A15 15 0 0 1 28 7.500H15z" fill="#e33b2e" />
          <path d="M15 15L2 7.500A15 15 0 0 0 15 30l6.500-11.300z" fill="#279847" />
          <path d="M15 7.500H28A15 15 0 0 1 15 30l6.500-11.300z" fill="#fbc116" />
          <circle cx="15" cy="15" r="7.500" fill="#fff" /><circle cx="15" cy="15" r="6" fill="#2b73e8" />
        </svg>
        <i className="absolute bottom-0 h-[4px] w-[20px] rounded-full bg-[#4cc2ff]" />
      </div>
      <div className="ml-auto flex items-center pr-[25px] pb-[2px]">
        <ChevronUp size={20} strokeWidth={2.200} />
        <svg width="22" height="18" viewBox="0 0 22 18" className="ml-[20px]">
          <path d="M4 12a4 4 0 0 1 1-7.500 6 6 0 0 1 11 1l1 6.500z" fill="#8a8a8a" /><path d="M4 14a4 4 0 0 1 0-8q4-2 7 2l2 6z" fill="#d8d8d8" />
          <circle cx="14.500" cy="12" r="5.700" fill="#fbe106" /><path d="M14.500 8.500v4.300M14.500 14v1.500" stroke="#222" strokeWidth="1.500" />
        </svg>
        <div className="ml-[13px] w-[46px] text-center">ENG<br />IN</div>
        <svg width="21" height="16" viewBox="0 0 21 16" fill="none" stroke="#fff" strokeWidth="1.600" strokeLinecap="round" className="ml-[14px]">
          <path d="M1 5.500a13.500 13.500 0 0 1 19 0M3.800 8.600a9.500 9.500 0 0 1 13.400 0M6.600 11.500a5.500 5.500 0 0 1 7.800 0" /><circle cx="10.500" cy="13.800" r="1.300" fill="#fff" />
        </svg>
        <svg width="21" height="18" viewBox="0 0 21 18" fill="none" stroke="#fff" strokeWidth="1.500" strokeLinecap="round" strokeLinejoin="round" className="ml-[9px]">
          <path d="M1 6.500h3L9 2v14l-5-4.500H1zM12 6.500q1.500 2.500 0 5M14.800 4q3 5 0 10M17.400 2q4.400 7 0 14" />
        </svg>
        <svg width="21" height="14" viewBox="0 0 21 14" fill="none" stroke="#fff" strokeWidth="1.500" className="ml-[9px]">
          <rect x=".8" y=".8" width="16.500" height="12.400" rx="3" /><rect x="3" y="3" width="2.500" height="8" rx=".8" fill="#fff" stroke="none" /><path d="M19 4.500v5" strokeWidth="2.500" />
        </svg>
        <div className="ml-[14px] w-[83px] text-right tracking-[0.3px] whitespace-nowrap">10:35<br />20-07-2025</div>
        <svg width="18" height="19" viewBox="0 0 18 19" fill="none" stroke="#fff" strokeWidth="1.500" className="ml-[10px]" strokeLinejoin="round">
          <path d="M9 2Q3.500 2.500 3.500 8v3.500L1.500 15h14l-1.500-3M6.500 15.500q2 3 5 0M6.500 6.500H10l-3.500 4.500H10.500M12.500 1H16.500l-4 5H17" />
        </svg>
      </div>
    </div>
  );
}

export default function App() {
  return (
    <div className="flex h-[1080px] w-[1920px] flex-col overflow-hidden bg-white font-['Open_Sans','Noto_Sans',sans-serif]">
      <TabStrip />
      <Toolbar />
      <div className="flex h-[911px] shrink-0 overflow-hidden">
        <Sidebar />
        <main className="flex min-w-0 flex-1 flex-col overflow-hidden pl-5">
          <h1 className="-mt-[12px] h-[40px] shrink-0 text-[28.500px] leading-[40px] font-bold tracking-[0.01px] whitespace-nowrap text-[#0a0a0a]">Asset Location Map - Finecons, Chennai</h1>
          <p className="h-[28px] text-[19px] leading-[28px] tracking-[0.03px] text-[#717682]">View the geographical distribution of all IT assets at Finecons Chennai office</p>
          <div className="w-[1541px]"><HeaderCard /></div>
          <div className="mt-5 flex"><MapPanel /><SidePanel /></div>
        </main>
        <ScrollBar />
      </div>
      <Taskbar />
    </div>
  );
}
